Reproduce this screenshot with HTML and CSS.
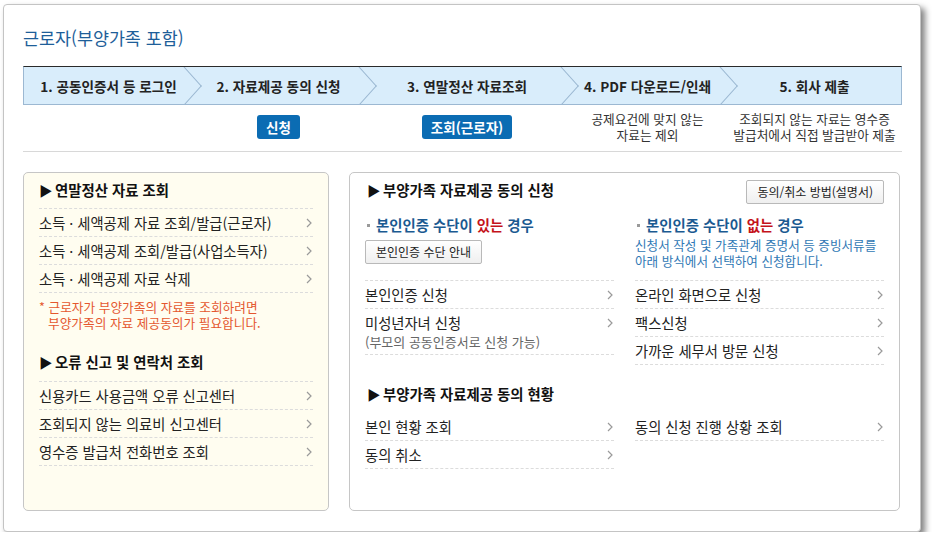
FILE: index.html
```html
<!DOCTYPE html>
<html lang="ko">
<head>
<meta charset="utf-8">
<title>근로자(부양가족 포함)</title>
<link rel="stylesheet" href="styles.css">
</head>
<body>
<div class="window">
  <h1 class="page-title">근로자(부양가족 포함)</h1>

  <ol class="steps">
    <li class="step">1. 공동인증서 등 로그인</li>
    <li class="step">2. 자료제공 동의 신청</li>
    <li class="step">3. 연말정산 자료조회</li>
    <li class="step">4. PDF 다운로드/인쇄</li>
    <li class="step">5. 회사 제출</li>
  </ol>

  <div class="step-actions">
    <div class="step-cell"></div>
    <div class="step-cell"><a class="btn-primary" href="#">신청</a></div>
    <div class="step-cell"><a class="btn-primary" href="#">조회(근로자)</a></div>
    <div class="step-cell step-note">공제요건에 맞지 않는<br>자료는 제외</div>
    <div class="step-cell step-note">조회되지 않는 자료는 영수증<br>발급처에서 직접 발급받아 제출</div>
  </div>

  <div class="content">
    <section class="panel panel-side">
      <h2 class="sec-title"><span class="tri">▶</span>연말정산 자료 조회</h2>
      <ul class="link-list">
        <li><a class="link" href="#"><span>소득 · 세액공제 자료 조회/발급(근로자)</span><svg class="arr" width="6" height="10" viewBox="0 0 6 10"><path d="M1 1l4 4-4 4" fill="none" stroke="#9a9a9a" stroke-width="1.2"/></svg></a></li>
        <li><a class="link" href="#"><span>소득 · 세액공제 조회/발급(사업소득자)</span><svg class="arr" width="6" height="10" viewBox="0 0 6 10"><path d="M1 1l4 4-4 4" fill="none" stroke="#9a9a9a" stroke-width="1.2"/></svg></a></li>
        <li><a class="link" href="#"><span>소득 · 세액공제 자료 삭제</span><svg class="arr" width="6" height="10" viewBox="0 0 6 10"><path d="M1 1l4 4-4 4" fill="none" stroke="#9a9a9a" stroke-width="1.2"/></svg></a></li>
      </ul>
      <p class="side-note">* 근로자가 부양가족의 자료를 조회하려면<br>부양가족의 자료 제공동의가 필요합니다.</p>

      <h2 class="sec-title sec-title-2"><span class="tri">▶</span>오류 신고 및 연락처 조회</h2>
      <ul class="link-list">
        <li><a class="link" href="#"><span>신용카드 사용금액 오류 신고센터</span><svg class="arr" width="6" height="10" viewBox="0 0 6 10"><path d="M1 1l4 4-4 4" fill="none" stroke="#9a9a9a" stroke-width="1.2"/></svg></a></li>
        <li><a class="link" href="#"><span>조회되지 않는 의료비 신고센터</span><svg class="arr" width="6" height="10" viewBox="0 0 6 10"><path d="M1 1l4 4-4 4" fill="none" stroke="#9a9a9a" stroke-width="1.2"/></svg></a></li>
        <li><a class="link" href="#"><span>영수증 발급처 전화번호 조회</span><svg class="arr" width="6" height="10" viewBox="0 0 6 10"><path d="M1 1l4 4-4 4" fill="none" stroke="#9a9a9a" stroke-width="1.2"/></svg></a></li>
      </ul>
    </section>

    <section class="panel panel-main">
      <div class="main-head">
        <h2 class="sec-title main-title"><span class="tri">▶</span>부양가족 자료제공 동의 신청</h2>
        <a class="btn-line" href="#">동의/취소 방법(설명서)</a>
      </div>

      <div class="cols">
        <div class="intro intro-left">
          <h3 class="sub-heading"><span class="dot"></span>본인인증 수단이&nbsp;<em class="hl">있는</em>&nbsp;경우</h3>
          <a class="btn-line btn-guide" href="#">본인인증 수단 안내</a>
        </div>
        <div class="intro">
          <h3 class="sub-heading"><span class="dot"></span>본인인증 수단이&nbsp;<em class="hl">없는</em>&nbsp;경우</h3>
          <p class="intro-desc">신청서 작성 및 가족관계 증명서 등 증빙서류를<br>아래 방식에서 선택하여 신청합니다.</p>
        </div>
        <ul class="link-list">
          <li><a class="link" href="#"><span>본인인증 신청</span><svg class="arr" width="6" height="10" viewBox="0 0 6 10"><path d="M1 1l4 4-4 4" fill="none" stroke="#9a9a9a" stroke-width="1.2"/></svg></a></li>
          <li><a class="link" href="#"><span>미성년자녀 신청</span><svg class="arr" width="6" height="10" viewBox="0 0 6 10"><path d="M1 1l4 4-4 4" fill="none" stroke="#9a9a9a" stroke-width="1.2"/></svg></a><p class="link-sub">(부모의 공동인증서로 신청 가능)</p></li>
        </ul>
        <ul class="link-list">
          <li><a class="link" href="#"><span>온라인 화면으로 신청</span><svg class="arr" width="6" height="10" viewBox="0 0 6 10"><path d="M1 1l4 4-4 4" fill="none" stroke="#9a9a9a" stroke-width="1.2"/></svg></a></li>
          <li><a class="link" href="#"><span>팩스신청</span><svg class="arr" width="6" height="10" viewBox="0 0 6 10"><path d="M1 1l4 4-4 4" fill="none" stroke="#9a9a9a" stroke-width="1.2"/></svg></a></li>
          <li><a class="link" href="#"><span>가까운 세무서 방문 신청</span><svg class="arr" width="6" height="10" viewBox="0 0 6 10"><path d="M1 1l4 4-4 4" fill="none" stroke="#9a9a9a" stroke-width="1.2"/></svg></a></li>
        </ul>
      </div>

      <h2 class="sec-title main-title status-title"><span class="tri">▶</span>부양가족 자료제공 동의 현황</h2>
      <div class="cols cols-status">
        <ul class="link-list no-top">
          <li><a class="link" href="#"><span>본인 현황 조회</span><svg class="arr" width="6" height="10" viewBox="0 0 6 10"><path d="M1 1l4 4-4 4" fill="none" stroke="#9a9a9a" stroke-width="1.2"/></svg></a></li>
          <li><a class="link" href="#"><span>동의 취소</span><svg class="arr" width="6" height="10" viewBox="0 0 6 10"><path d="M1 1l4 4-4 4" fill="none" stroke="#9a9a9a" stroke-width="1.2"/></svg></a></li>
        </ul>
        <ul class="link-list no-top">
          <li><a class="link" href="#"><span>동의 신청 진행 상황 조회</span><svg class="arr" width="6" height="10" viewBox="0 0 6 10"><path d="M1 1l4 4-4 4" fill="none" stroke="#9a9a9a" stroke-width="1.2"/></svg></a></li>
        </ul>
      </div>
    </section>
  </div>
</div>
</body>
</html>
```

FILE: styles.css
```css
* { box-sizing: border-box; }

body {
  margin: 0;
  background: #fff;
  font-family: "Noto Sans CJK KR", "Noto Sans", sans-serif;
  color: #222;
}

.window {
  width: 918px;
  height: 528px;
  margin: 4px 0 0 3px;
  padding: 0 18px 0 19px;
  background: #fff;
  border: 1px solid #c4c4c4;
  border-radius: 4px;
  box-shadow: 4px 4px 6px rgba(0, 0, 0, 0.5);
}

.page-title {
  margin: 22px 0 17px;
  font-size: 17.4px;
  line-height: 22px;
  font-weight: normal;
  color: #1e5e99;
}

/* steps bar */
.steps {
  list-style: none;
  margin: 0;
  padding: 0;
  height: 39px;
  display: grid;
  grid-template-columns: 160px 175px 202px 159px 1fr;
  background: #d9edfb;
  border-top: 1px solid #2a2a2a;
  border-bottom: 1px solid #9cb8d2;
  border-left: 1px solid #9cb8d2;
  border-right: 1px solid #9cb8d2;
  overflow: hidden;
}

.step {
  position: relative;
  display: flex;
  align-items: center;
  justify-content: center;
  padding-left: 14px;
  font-size: 13.6px;
  font-weight: bold;
  color: #222;
  white-space: nowrap;
}

.step:first-child { padding-left: 9px; }
.step:last-child { padding-left: 8px; }

.step:not(:last-child)::after {
  content: "";
  position: absolute;
  top: 50%;
  right: 0;
  width: 27px;
  height: 27px;
  border-top: 1px solid #9ab7d1;
  border-right: 1px solid #9ab7d1;
  transform: translate(50%, -50%) scaleX(0.9) rotate(45deg);
}

/* actions under steps */
.step-actions {
  display: grid;
  grid-template-columns: 160px 175px 202px 159px 1fr;
  padding: 0 1px 8px;
  border-bottom: 1px solid #d8d8d8;
}

.step-cell {
  text-align: center;
  padding-left: 14px;
}

.step-cell:first-child { padding-left: 9px; }
.step-cell:last-child { padding-left: 8px; }

.step-note {
  padding-top: 6px;
  font-size: 12.7px;
  line-height: 16px;
  color: #333;
  white-space: nowrap;
}

.btn-primary {
  display: inline-block;
  margin-top: 10px;
  height: 24px;
  line-height: 24px;
  padding: 0 9px;
  background: #0b6cb3;
  color: #fff;
  font-size: 13.5px;
  font-weight: bold;
  border-radius: 3px;
  text-decoration: none;
}

/* content */
.content {
  display: flex;
  gap: 20px;
  margin-top: 20px;
}

.panel {
  height: 339px;
  border: 1px solid #c6c6c6;
  border-radius: 5px;
  padding: 7px 15px 0;
}

.panel-side {
  width: 306px;
  background: #fffdf0;
}

.panel-main {
  width: 551px;
  background: #fff;
}

.sec-title {
  margin: 0 0 8px;
  font-size: 14.4px;
  line-height: 20px;
  font-weight: bold;
  color: #111;
  white-space: nowrap;
}

.tri {
  display: inline-block;
  font-size: 13.5px;
  width: 14px;
  margin-right: 2px;
}

.sec-title-2 {
  margin-top: 21px;
  margin-bottom: 9px;
}

.link-list {
  list-style: none;
  margin: 0;
  padding: 0;
  border-top: 1px dashed #dcdcdc;
}

.link-list.no-top { border-top: 0; }

.link-list li {
  border-bottom: 1px dashed #dcdcdc;
}

.link {
  display: flex;
  align-items: center;
  justify-content: space-between;
  min-height: 27px;
  padding-right: 1px;
  font-size: 14.3px;
  color: #222;
  text-decoration: none;
  white-space: nowrap;
}

.arr { flex: none; }

.link-sub {
  margin: -1px 0 0;
  padding-bottom: 5px;
  font-size: 13px;
  line-height: 14px;
  color: #666;
}

.side-note {
  margin: 6px 0 0;
  padding-left: 9px;
  text-indent: -9px;
  font-size: 12.7px;
  line-height: 16px;
  color: #e4572e;
}

/* main panel */
.main-head {
  display: flex;
  justify-content: space-between;
  align-items: flex-start;
}

.main-title {
  margin: 0 0 0 2px;
}

.btn-line {
  display: inline-block;
  height: 24px;
  line-height: 22px;
  padding: 0 10px;
  border: 1px solid #b9b9b9;
  border-radius: 2px;
  background: linear-gradient(#ffffff, #efefef);
  font-size: 12px;
  color: #222;
  text-decoration: none;
  white-space: nowrap;
}

.cols {
  display: grid;
  grid-template-columns: 1fr 1fr;
  column-gap: 21px;
  margin-top: 11px;
}

.intro-left { padding-bottom: 16px; }

.sub-heading {
  display: flex;
  align-items: center;
  margin: 0;
  font-size: 14.4px;
  line-height: 20px;
  font-weight: bold;
  color: #1b5a91;
  white-space: nowrap;
}

.sub-heading .dot {
  width: 3px;
  height: 3px;
  margin: 0 6px 0 2px;
  background: #9a9a9a;
}

.hl {
  font-style: normal;
  color: #c4121a;
}

.btn-guide {
  margin-top: 5px;
  padding: 0 10px;
}

.intro-desc {
  margin: 2px 0 0;
  font-size: 12.6px;
  line-height: 16px;
  color: #2f78b5;
  white-space: nowrap;
}

.status-title { margin-top: 19px; }

.cols-status { margin-top: 9px; }
```
